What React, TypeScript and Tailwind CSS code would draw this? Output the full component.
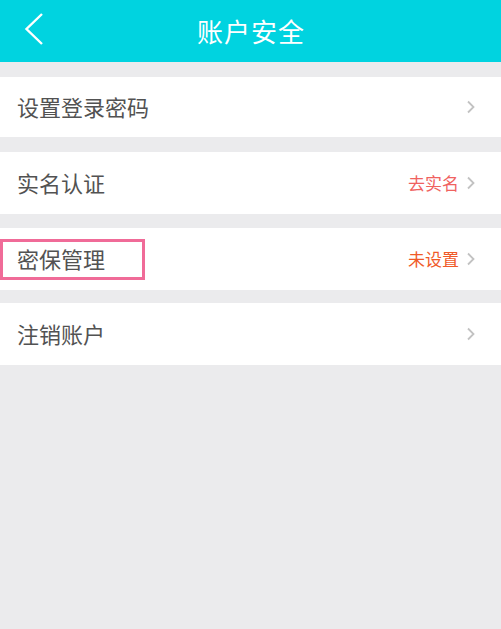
import { ReactNode } from 'react';

interface RowProps {
  label: string;
  hint?: string;
  hintColor?: string;
  highlight?: boolean;
  className?: string;
}

function Chevron() {
  return (
    <svg width="10" height="14" viewBox="0 0 10 14" className="shrink-0">
      <path d="M2 1.5 L7.5 7 L2 12.5" fill="none" stroke="#c2c2c2" strokeWidth="1.8" />
    </svg>
  );
}

function Row({ label, hint, hintColor, highlight, className }: RowProps) {
  let labelNode: ReactNode = (
    <span className="pb-[3px] text-[22px] leading-none text-[#525252]">{label}</span>
  );
  if (highlight) {
    labelNode = (
      <div className="-ml-[17px] flex h-[41px] w-[145px] items-center border-[3px] border-[#f06b98] pl-[14px]">
        {labelNode}
      </div>
    );
  }
  return (
    <div className={`flex items-center justify-between bg-white pl-[17px] pr-[25px] ${className ?? ''}`}>
      {labelNode}
      <div className="flex items-center gap-[7px]">
        {hint && <span className={`pb-[2px] text-[17px] leading-none ${hintColor}`}>{hint}</span>}
        <Chevron />
      </div>
    </div>
  );
}

export default function App() {
  return (
    <div
      className="flex h-[629px] w-[501px] flex-col bg-[#ebebed]"
      style={{ fontFamily: '"Noto Sans CJK SC", "Noto Sans", sans-serif' }}
    >
      <header className="relative flex h-[62px] shrink-0 items-center justify-center bg-[#00d3e0]">
        <button className="absolute left-[22px] top-[12px] p-0">
          <svg width="24" height="34" viewBox="0 0 24 34">
            <path d="M20 2 L4.5 17 L20 32" fill="none" stroke="#ffffff" strokeWidth="2.4" />
          </svg>
        </button>
        <h1 className="pb-[2px] pl-[1px] text-[26px] font-normal tracking-[1px] text-white">账户安全</h1>
      </header>
      <Row label="设置登录密码" className="mt-[15px] h-[60px]" />
      <Row
        label="实名认证"
        hint="去实名"
        hintColor="text-[#f0625f]"
        className="mt-[15px] h-[62px]"
      />
      <Row
        label="密保管理"
        hint="未设置"
        hintColor="text-[#f05a28]"
        highlight
        className="mt-[14px] h-[62px]"
      />
      <Row label="注销账户" className="mt-[13px] h-[62px]" />
    </div>
  );
}
